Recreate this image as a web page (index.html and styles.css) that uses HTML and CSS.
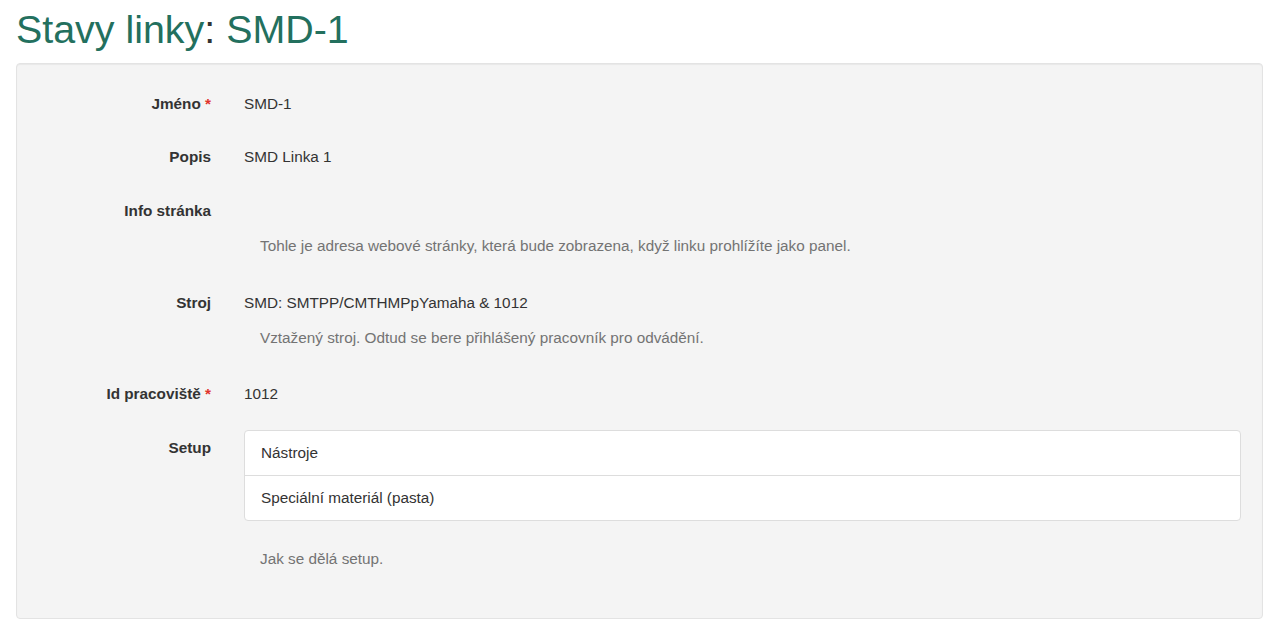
FILE: index.html
```html
<!DOCTYPE html>
<html lang="cs">

<head>
    <meta charset="UTF-8">
    <meta name="viewport" content="width=device-width, initial-scale=1.0">
    <title>Stavy linky: SMD-1</title>
    <link rel="stylesheet" href="styles.css">
</head>

<body>
    <div class="page">
        <h1 class="title"><a href="#">Stavy linky</a>: <a href="#">SMD-1</a></h1>

        <div class="well">
            <div class="form-row">
                <div class="label">Jméno <span class="req">*</span></div>
                <div class="value">SMD-1</div>
            </div>

            <div class="form-row">
                <div class="label">Popis</div>
                <div class="value">SMD Linka 1</div>
            </div>

            <div class="form-row">
                <div class="label">Info stránka</div>
                <div class="value">
                    <div class="static"></div>
                    <p class="help">Tohle je adresa webové stránky, která bude zobrazena, když linku prohlížíte jako panel.</p>
                </div>
            </div>

            <div class="form-row">
                <div class="label">Stroj</div>
                <div class="value">
                    <div class="static">SMD: SMTPP/CMTHMPpYamaha &amp; 1012</div>
                    <p class="help">Vztažený stroj. Odtud se bere přihlášený pracovník pro odvádění.</p>
                </div>
            </div>

            <div class="form-row">
                <div class="label">Id pracoviště <span class="req">*</span></div>
                <div class="value">1012</div>
            </div>

            <div class="form-row">
                <div class="label">Setup</div>
                <div class="value">
                    <ul class="list-group">
                        <li>Nástroje</li>
                        <li>Speciální materiál (pasta)</li>
                    </ul>
                    <p class="help setup-help">Jak se dělá setup.</p>
                </div>
            </div>
        </div>
    </div>
</body>

</html>
```

FILE: styles.css
```css
body {
    margin: 0;
    font-family: "Liberation Sans", Arial, sans-serif;
    font-size: 15.3px;
    line-height: 20px;
    color: #333;
    background: #fff;
}

.page {
    padding: 0 13px 0 16px;
}

.title {
    margin: 0;
    padding-top: 8px;
    height: 55px;
    font-size: 39.4px;
    line-height: 43px;
    font-weight: normal;
    color: #333;
}

.title a {
    color: #23705e;
    text-decoration: none;
}

.well {
    background-color: #f4f4f4;
    border: 1px solid #e3e3e3;
    border-radius: 4px;
    box-shadow: inset 0 1px 1px rgba(0, 0, 0, 0.05);
    padding: 30px 21px 49px 0;
}

.form-row {
    display: grid;
    grid-template-columns: 194px 1fr;
    column-gap: 33px;
    margin-bottom: 34px;
}

.form-row:first-child {
    margin-bottom: 33px;
}

.form-row:nth-child(3) {
    margin-bottom: 37px;
}

.form-row:nth-child(4) {
    margin-bottom: 36px;
}

.form-row:last-child {
    margin-bottom: 0;
}

.label {
    text-align: right;
    font-weight: bold;
}

.req {
    color: #e0342c;
}

.static {
    min-height: 20px;
}

.help {
    margin: 15px 0 0 16px;
    color: #737373;
}

.list-group {
    list-style: none;
    margin: -8px 0 0;
    padding: 0;
    background: #fff;
    border: 1px solid #ddd;
    border-radius: 4px;
}

.list-group li {
    padding: 12px 16px;
    border-top: 1px solid #ddd;
}

.list-group li:first-child {
    border-top: none;
}

.setup-help {
    margin-top: 28px;
}
```
